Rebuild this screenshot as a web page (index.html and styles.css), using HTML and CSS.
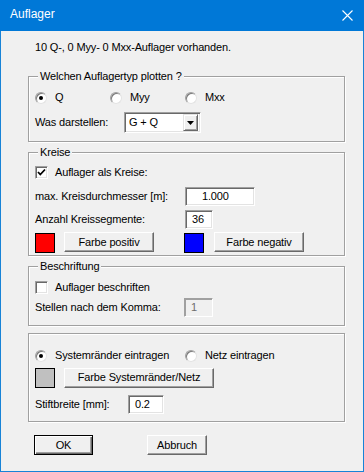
FILE: index.html
```html
<!DOCTYPE html>
<html lang="de">
<head>
    <meta charset="UTF-8">
    <title>Auflager</title>
    <link rel="stylesheet" href="styles.css">
</head>
<body>
    <div class="window">
        <div class="titlebar">
            <span class="title">Auflager</span>
            <svg class="close" width="11" height="11" viewBox="0 0 11 11">
                <path d="M0.5 0.5 L10.5 10.5 M10.5 0.5 L0.5 10.5" stroke="#fff" stroke-width="1.1" fill="none"/>
            </svg>
        </div>

        <div class="client">
            <p class="info">10 Q-, 0 Myy- 0 Mxx-Auflager vorhanden.</p>

            <!-- Auflagertyp -->
            <div class="group group-type">
                <span class="legend">Welchen Auflagertyp plotten ?</span>
                <div class="radios radios-type">
                    <label class="opt"><span class="radio on"></span>Q</label>
                    <label class="opt"><span class="radio"></span>Myy</label>
                    <label class="opt"><span class="radio"></span>Mxx</label>
                </div>
                <div class="row row-select">
                    <span class="label w-select">Was darstellen:</span>
                    <div class="combo">
                        <span class="combo-text">G + Q</span>
                        <span class="combo-btn">
                            <svg width="7" height="4" viewBox="0 0 7 4"><path d="M0 0 H7 L3.5 4 Z" fill="#000"/></svg>
                        </span>
                    </div>
                </div>
            </div>

            <!-- Kreise -->
            <div class="group group-circles">
                <span class="legend">Kreise</span>
                <label class="opt check-row">
                    <span class="checkbox">
                        <svg width="11" height="11" viewBox="0 0 11 11"><path d="M2 5 L4.3 7.5 L9 2.5" stroke="#000" stroke-width="1.8" fill="none"/></svg>
                    </span>Auflager als Kreise:
                </label>
                <div class="row row-diam">
                    <span class="label w-wide">max. Kreisdurchmesser [m]:</span>
                    <span class="field field-diam">1.000</span>
                </div>
                <div class="row row-seg">
                    <span class="label w-wide">Anzahl Kreissegmente:</span>
                    <span class="field field-seg">36</span>
                </div>
                <div class="row row-colors">
                    <span class="swatch red"></span>
                    <button class="btn btn-color">Farbe positiv</button>
                    <span class="swatch blue"></span>
                    <button class="btn btn-color">Farbe negativ</button>
                </div>
            </div>

            <!-- Beschriftung -->
            <div class="group group-labels">
                <span class="legend">Beschriftung</span>
                <label class="opt check-row"><span class="checkbox"></span>Auflager beschriften</label>
                <div class="row row-digits">
                    <span class="label w-digits">Stellen nach dem Komma:</span>
                    <span class="field field-digits disabled">1</span>
                </div>
            </div>

            <!-- Systemränder / Netz -->
            <div class="group group-system">
                <div class="radios radios-system">
                    <label class="opt"><span class="radio on"></span>Systemränder eintragen</label>
                    <label class="opt"><span class="radio"></span>Netz eintragen</label>
                </div>
                <div class="row row-syscolor">
                    <span class="swatch grey"></span>
                    <button class="btn btn-system">Farbe Systemränder/Netz</button>
                </div>
                <div class="row row-pen">
                    <span class="label w-pen">Stiftbreite [mm]:</span>
                    <span class="field field-pen">0.2</span>
                </div>
            </div>

            <div class="actions">
                <button class="btn btn-ok">OK</button>
                <button class="btn btn-cancel">Abbruch</button>
            </div>
        </div>
    </div>
</body>
</html>
```

FILE: styles.css
```css
* { margin: 0; padding: 0; box-sizing: border-box; }
body {
    font-family: 'Liberation Sans', Arial, sans-serif;
    font-size: 11px;
    line-height: 13px;
    letter-spacing: -0.15px;
    color: #000;
    background: #fff;
}
.window {
    width: 364px;
    height: 472px;
    background: #f0f0f0;
    border: 1px solid #1883d7;
    border-top: none;
}
.titlebar {
    height: 31px;
    margin: 0 -1px;
    background: #0078d7;
    color: #fff;
    display: flex;
    align-items: center;
    padding: 0 11px 2px 10px;
    font-size: 12px;
    line-height: 15px;
    letter-spacing: 0;
}
.close { margin-left: auto; margin-top: 2px; }

.client { padding: 10px 0 0 27px; }
.info { margin-left: 7px; }

/* group boxes with etched frame */
.group {
    width: 317px;
    border: 1px solid #a0a0a0;
    box-shadow: 1px 1px 0 #fff, inset 1px 1px 0 #fff;
    padding: 0 6px;
    display: flex;
    flex-direction: column;
}
.legend {
    align-self: flex-start;
    margin: -7px 0 0 3px;
    padding: 0 2px;
    background: #f0f0f0;
}
.group-type { margin-top: 22px; padding-bottom: 8px; }
.group-type .radios { margin-top: 8px; }
.group-type .row-select { margin-top: 8px; }

.group-circles { margin-top: 10px; padding-bottom: 2px; }
.group-circles .check-row { margin-top: 7px; }
.row-diam { margin-top: 8px; }
.row-seg { margin-top: 4px; }
.row-colors { margin-top: 2px; align-items: flex-start; }

.group-labels { margin-top: 10px; padding-bottom: 8px; }
.group-labels .check-row { margin-top: 8px; }
.row-digits { margin-top: 4px; }

.group-system { margin-top: 7px; padding-bottom: 7px; }
.radios-system { margin-top: 15px; }
.row-syscolor { margin-top: 5px; align-items: flex-start; }
.row-pen { margin-top: 7px; }

/* rows and labels */
.row { display: flex; align-items: center; }
.label { flex: none; }
.w-select { width: 89px; }
.w-wide { width: 150px; }
.w-digits { width: 149px; }
.w-pen { width: 93px; }

.radios { display: grid; height: 13px; }
.radios-type { grid-template-columns: 75px 75px 1fr; }
.radios-system { grid-template-columns: 150px 1fr; }
.opt { display: flex; align-items: center; height: 13px; }

.radio {
    width: 12px;
    height: 12px;
    margin-right: 8px;
    border-radius: 50%;
    background: #fff;
    border: 1px solid;
    border-color: #a0a0a0 #e3e3e3 #e3e3e3 #a0a0a0;
    box-shadow: inset 1px 1px 0 #7a7a7a;
    display: flex;
    align-items: center;
    justify-content: center;
}
.radio.on::after {
    content: '';
    width: 4px;
    height: 4px;
    border-radius: 50%;
    background: #000;
}
.checkbox {
    width: 13px;
    height: 13px;
    margin-right: 7px;
    background: #fff;
    border: 1px solid;
    border-color: #a0a0a0 #fff #fff #a0a0a0;
    box-shadow: inset 1px 1px 0 #696969, inset -1px -1px 0 #e3e3e3;
    display: flex;
    align-items: center;
    justify-content: center;
}

/* text fields */
.field {
    height: 19px;
    background: #fff;
    border: 1px solid;
    border-color: #a0a0a0 #fff #fff #a0a0a0;
    box-shadow: inset 1px 1px 0 #696969, inset -1px -1px 0 #e3e3e3;
    padding: 2px 0 0 6px;
}
.field-diam { width: 70px; padding-left: 16px; }
.field-seg { width: 28px; }
.field-digits { width: 29px; }
.field-pen { width: 36px; }
.field.disabled {
    background: #f0f0f0;
    color: #6d6d6d;
    box-shadow: inset 1px 1px 0 #a0a0a0;
}

/* combo box */
.combo {
    width: 77px;
    height: 21px;
    background: #fff;
    border: 1px solid;
    border-color: #a0a0a0 #fff #fff #a0a0a0;
    box-shadow: inset 1px 1px 0 #696969, inset -1px -1px 0 #e3e3e3;
    display: flex;
    align-items: center;
    padding: 2px 2px 2px 4px;
}
.combo-text { flex: 1; }
.combo-btn {
    width: 15px;
    height: 17px;
    background: #f0f0f0;
    border: 1px solid;
    border-color: #e3e3e3 #696969 #696969 #e3e3e3;
    box-shadow: inset 1px 1px 0 #fff, inset -1px -1px 0 #a0a0a0;
    display: flex;
    align-items: center;
    justify-content: center;
}

/* colour swatches */
.swatch {
    width: 20px;
    height: 20px;
    border: 1px solid #000;
    margin-top: 2px;
}
.swatch.red { background: #ff0000; }
.swatch.blue { background: #0000ff; margin-left: 30px; }
.swatch.grey { background: #c0c0c0; margin-top: 1px; }

/* push buttons */
.btn {
    font-family: inherit;
    font-size: 11px;
    line-height: 13px;
    letter-spacing: inherit;
    color: #000;
    height: 20px;
    background: #f0f0f0;
    border: 1px solid;
    border-color: #fff #696969 #696969 #fff;
    box-shadow: inset -1px -1px 0 #a0a0a0;
}
.btn-color { width: 90px; margin-left: 9px; }
.swatch.blue + .btn-color { margin-left: 10px; }
.btn-system { width: 150px; margin-left: 9px; }

.actions { display: flex; margin-top: 13px; padding-left: 6px; }
.btn-ok {
    width: 59px;
    border-color: #000;
    box-shadow: inset 1px 1px 0 #fff, inset -1px -1px 0 #696969, inset -2px -2px 0 #a0a0a0;
}
.btn-cancel { width: 60px; margin-left: 54px; }
```
